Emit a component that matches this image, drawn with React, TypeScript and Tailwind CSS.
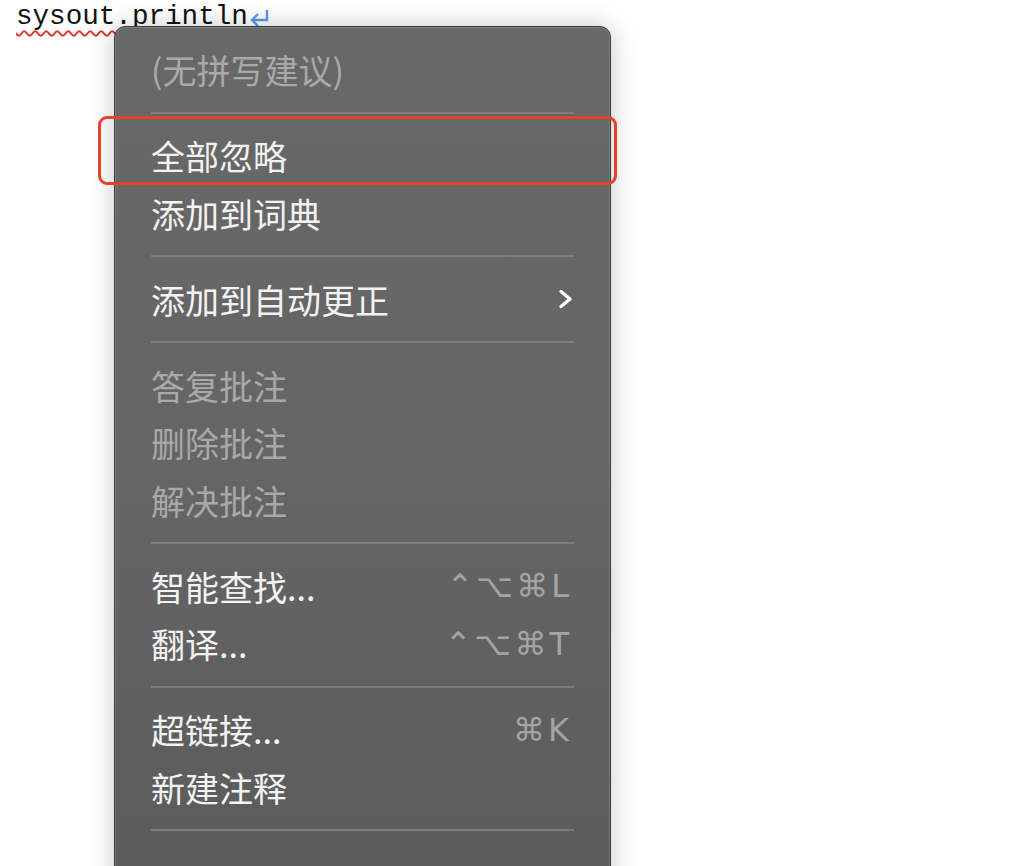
type Item = {
  label: string;
  disabled?: boolean;
  shortcut?: string;
  submenu?: boolean;
};

type Entry = Item | 'sep';

const entries: Entry[] = [
  { label: '(无拼写建议)', disabled: true },
  'sep',
  { label: '全部忽略' },
  { label: '添加到词典' },
  'sep',
  { label: '添加到自动更正', submenu: true },
  'sep',
  { label: '答复批注', disabled: true },
  { label: '删除批注', disabled: true },
  { label: '解决批注', disabled: true },
  'sep',
  { label: '智能查找...', shortcut: '⌃⌥⌘L' },
  { label: '翻译...', shortcut: '⌃⌥⌘T' },
  'sep',
  { label: '超链接...', shortcut: '⌘K' },
  { label: '新建注释' },
  'sep',
];

function ReturnMark() {
  return (
    <svg width="22" height="20" viewBox="0 0 22 20" className="inline-block mb-[4px]">
      <path d="M19 2 V12 H4" fill="none" stroke="#5b9bea" strokeWidth="2.4" />
      <path d="M10 6 L4 12 L10 18" fill="none" stroke="#5b9bea" strokeWidth="2.4" />
    </svg>
  );
}

function Chevron() {
  return (
    <svg width="16" height="20" viewBox="0 0 16 20" className="-mr-[2px]">
      <path d="M3 2.5 L12 10 L3 17.5" fill="none" stroke="#ffffff" strokeWidth="3.4" strokeLinecap="round" strokeLinejoin="round" />
    </svg>
  );
}

export default function App() {
  return (
    <div className="relative h-[866px] w-[1016px] overflow-hidden bg-white">
      {/* document text */}
      <div className="pl-[16px] pt-0 leading-[38px] -mt-[2px] whitespace-nowrap">
        <span className="font-['Liberation_Mono',monospace] text-[27.6px] text-[#111] underline decoration-wavy decoration-[#e0322a] decoration-2 underline-offset-[6px]">
          sysout.println
        </span>
        <ReturnMark />
      </div>

      {/* context menu */}
      <div className="absolute left-[114px] top-[26px] h-[900px] w-[497px] rounded-[11px] border border-[#3a3a3a] bg-gradient-to-b from-[#686868] via-[#656565] to-[#5a5a5a] pt-[14px] shadow-[0_0_26px_rgba(0,0,0,0.22),inset_0_0_0_1px_rgba(255,255,255,0.16)] font-['Noto_Sans_CJK_SC','Noto_Sans',sans-serif]">
        {entries.map((e, i) =>
          e === 'sep' ? (
            <div key={i} className="flex h-[28.5px] items-center px-[36px]">
              <div className="h-[2px] w-full bg-[#7d7d7d]" />
            </div>
          ) : (
            <div
              key={i}
              className={`flex h-[57.5px] items-center justify-between pl-[36px] pr-[38px] text-[34px] ${
                e.disabled ? 'text-[#a9a9a9]' : 'text-[#f3f3f3]'
              }`}
            >
              <span>{e.label}</span>
              {e.shortcut && (
                <span className="text-[32px] tracking-[3px] text-[#a4a4a4] font-['DejaVu_Sans',sans-serif]">
                  {e.shortcut}
                </span>
              )}
              {e.submenu && <Chevron />}
            </div>
          )
        )}
      </div>

      {/* annotation highlight */}
      <div className="absolute left-[98px] top-[116px] h-[69px] w-[519px] rounded-[9px] border-[3px] border-[#e5412c]" />
    </div>
  );
}
